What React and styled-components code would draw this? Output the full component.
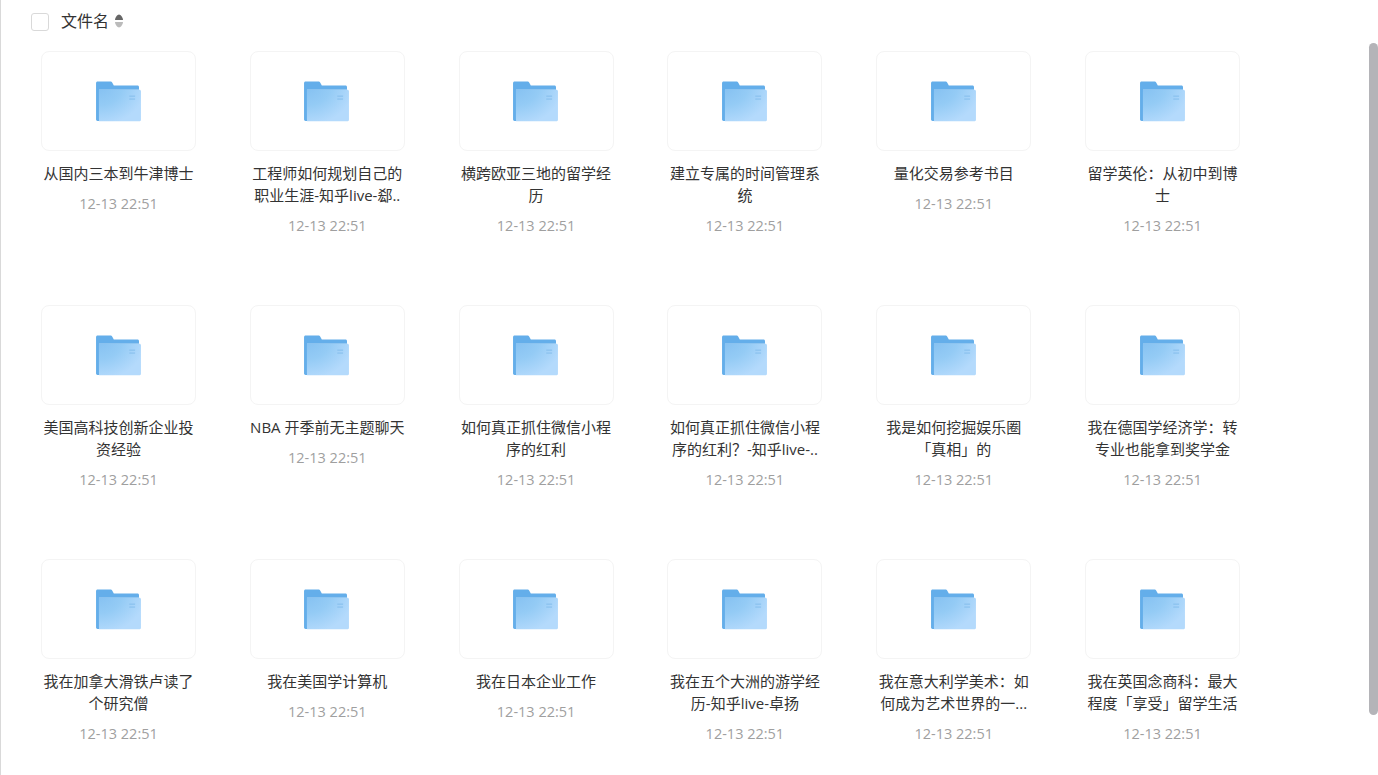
import React from 'react'
import styled, { createGlobalStyle } from 'styled-components'

const GlobalStyle = createGlobalStyle`
  html, body {
    margin: 0;
    padding: 0;
    height: 100%;
    overflow: hidden;
    background: #fff;
    font-family: "Open Sans", "Noto Sans CJK SC", sans-serif;
  }
`

const Page = styled.div`
  position: relative;
  box-sizing: border-box;
  height: 775px;
  overflow: hidden;
  border-left: 1px solid #d9d9d9;
`

const Toolbar = styled.div`
  display: flex;
  align-items: center;
  height: 43px;
  padding-left: 30px;
`

const Checkbox = styled.span`
  box-sizing: border-box;
  width: 18px;
  height: 18px;
  border: 1px solid #d9d9d9;
  border-radius: 3px;
  background: #fff;
`

const SortLabel = styled.span`
  margin-left: 12px;
  margin-top: -2px;
  font-size: 16px;
  line-height: 20px;
  color: #333;
`

const SortArrows = styled.svg`
  margin-left: 5px;
  margin-top: -1px;
  width: 10px;
  height: 14px;
`

const Grid = styled.div`
  display: grid;
  grid-template-columns: repeat(6, 155px);
  grid-auto-rows: 254px;
  column-gap: 53.8px;
  padding: 8px 0 0 40px;
`

const Item = styled.div`
  display: flex;
  flex-direction: column;
  align-items: center;
`

const Thumb = styled.div`
  box-sizing: border-box;
  display: flex;
  align-items: center;
  justify-content: center;
  width: 155px;
  height: 100px;
  border: 1px solid #f4f4f4;
  border-radius: 8px;
  background: #fff;
`

const Folder = styled.svg`
  margin-right: 0.9px;
  width: 45px;
  height: 41px;
`

const Name = styled.div`
  margin-top: 12px;
  width: 155px;
  font-size: 15px;
  line-height: 21.5px;
  color: #333;
  text-align: center;
  word-break: break-all;
`

const Time = styled.div`
  margin-top: 9.5px;
  font-size: 14.5px;
  line-height: 20px;
  color: #9f9f9f;
  text-align: center;
`

const Scrollbar = styled.div`
  position: absolute;
  top: 43px;
  right: 0;
  width: 9px;
  height: 672px;
  border-radius: 5px;
  background: #b4b4b8;
`

const FolderIcon = ({ id }) => (
  <Folder viewBox="0 0 46 42">
    <defs>
      <radialGradient id={id} cx="0" cy="0" r="1" gradientUnits="userSpaceOnUse" gradientTransform="translate(3 5) scale(48 40)">
        <stop offset="0" stopColor="#84c0f1" />
        <stop offset="0.5" stopColor="#94cbf5" />
        <stop offset="1" stopColor="#b4dafc" />
      </radialGradient>
    </defs>
    <path d="M1.5 0.5H14.5C15.6 0.5 16.2 1 16.8 2L18.2 4.5H42.5C43.3 4.5 44 5.2 44 6V9H3V41H1.5C0.7 41 0 40.3 0 39.5V2C0 1.2 0.7 0.5 1.5 0.5Z" fill="#64aeea" />
    <path d="M3 9H44.5C45.3 9 46 9.7 46 10.5V40C46 40.6 45.4 41.2 44.8 41.2H3Z" fill={`url(#${id})`} />
    <rect x="34" y="15" width="6" height="1" fill="#84bdec" />
    <rect x="34" y="18" width="6" height="1" fill="#84bdec" />
  </Folder>
)

const files = [
  '从国内三本到牛津博士',
  '工程师如何规划自己的职业生涯-知乎live-郄..',
  '横跨欧亚三地的留学经历',
  '建立专属的时间管理系统',
  '量化交易参考书目',
  '留学英伦：从初中到博士',
  '美国高科技创新企业投资经验',
  'NBA 开季前无主题聊天',
  '如何真正抓住微信小程序的红利',
  '如何真正抓住微信小程序的红利？-知乎live-..',
  '我是如何挖掘娱乐圈「真相」的',
  '我在德国学经济学：转专业也能拿到奖学金',
  '我在加拿大滑铁卢读了个研究僧',
  '我在美国学计算机',
  '我在日本企业工作',
  '我在五个大洲的游学经历-知乎live-卓扬',
  '我在意大利学美术：如何成为艺术世界的一...',
  '我在英国念商科：最大程度「享受」留学生活',
]

export default function App () {
  return (
    <Page>
      <GlobalStyle />
      <Toolbar>
        <Checkbox />
        <SortLabel>文件名</SortLabel>
        <SortArrows viewBox="0 0 10 14">
          <path d="M5 0.5C6.5 0.5 9 3.5 9 6H1C1 3.5 3.5 0.5 5 0.5Z" fill="#666" />
          <path d="M1 8H9C9 10.5 6.5 13.5 5 13.5C3.5 13.5 1 10.5 1 8Z" fill="#bbb" />
        </SortArrows>
      </Toolbar>
      <Grid>
        {files.map((name, i) => (
          <Item key={name}>
            <Thumb><FolderIcon id={`folder-${i}`} /></Thumb>
            <Name>{name}</Name>
            <Time>12-13 22:51</Time>
          </Item>
        ))}
      </Grid>
      <Scrollbar />
    </Page>
  )
}
